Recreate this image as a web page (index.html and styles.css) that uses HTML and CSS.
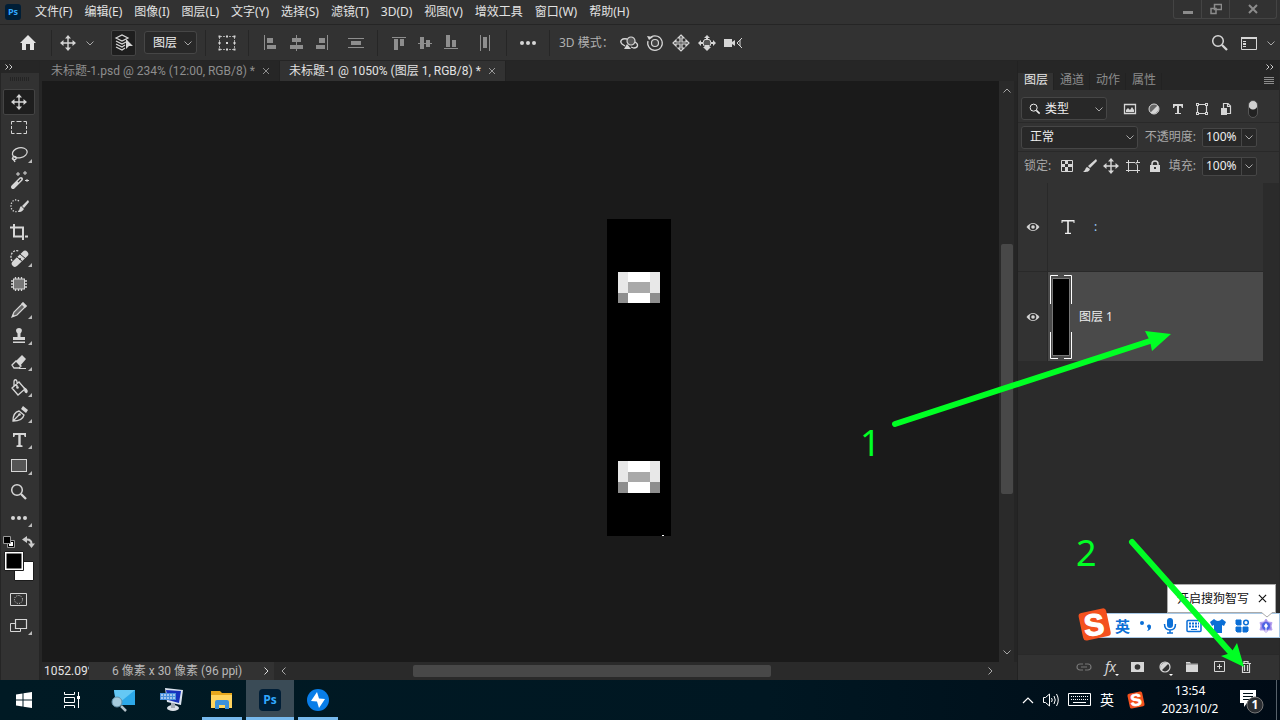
FILE: index.html
```html
<!DOCTYPE html>
<html lang="zh-CN">
<head>
<meta charset="utf-8">
<meta name="viewport" content="width=device-width, initial-scale=1">
<title>Photoshop</title>
<link rel="stylesheet" href="styles.css">
</head>
<body>
<svg class="sprite" aria-hidden="true">
  <symbol id="move" viewBox="-12 -12 24 24"><path d="M0-6V6M-6 0H6" fill="none" stroke="currentColor" stroke-width="1.4"/><path d="M0-8L3-4.500H-3ZM0 8L3 4.500H-3ZM-8 0L-4.500-3V3ZM8 0L4.500-3V3Z" fill="currentColor"/></symbol>
  <symbol id="chev" viewBox="-6 -6 12 12"><path d="M-3.500-1.500L0 2L3.500-1.500" fill="none" stroke="currentColor"/></symbol>
  <symbol id="more" viewBox="-12 -12 24 24"><g fill="currentColor"><circle cx="-6" r="2"/><circle r="2"/><circle cx="6" r="2"/></g></symbol>
  <symbol id="marquee" viewBox="-12 -12 24 24"><path d="M-7.500-3.500V-6.500H-4.500M-2.500-6.500H2.500M4.500-6.500H7.500V-3.500M7.500-2V1M7.500 2.500V5.500H4.500M2.500 5.500H-2.500M-4.500 5.500H-7.500V2.500M-7.500 1V-2" fill="none" stroke="currentColor"/></symbol>
  <symbol id="lasso" viewBox="-12 -12 24 24"><g fill="none" stroke="currentColor" stroke-width="1.300"><ellipse cx="1" cy="-1" rx="7.500" ry="5" transform="rotate(-12)"/><circle cx="-4.500" cy="4" r="1.700"/><path d="M-6 4C-8 5-5 5-4 8"/></g></symbol>
  <symbol id="wand" viewBox="-12 -12 24 24"><path d="M-6 7L2-1" stroke="currentColor" stroke-width="4" stroke-linecap="round"/><path d="M-1 2L2-1" stroke="#323232" stroke-width="1.300"/><path d="M-1-8V-4M-3-6H1M6-9V-5M4-7H8M8-1V2M6 .5H10" stroke="currentColor"/></symbol>
  <symbol id="quick" viewBox="-12 -12 24 24"><path d="M0-5C-5-8-8-4-8 0S-5 7 0 5" fill="none" stroke="currentColor" stroke-width="1.300" stroke-dasharray="1.300 1.500"/><path d="M9-6L10-4L5 2L3 0ZM2 0L5 3C3 6 1 6-1 6C1 4 0 2 2 0Z" fill="currentColor"/></symbol>
  <symbol id="crop" viewBox="-12 -12 24 24"><path d="M-6-4.500H4V8M-5-8V4.500H5" fill="none" stroke="currentColor" stroke-width="2"/><path d="M-9-5.500H-6V-3.500H-9ZM6 3.500H9V5.500H6Z" fill="currentColor"/></symbol>
  <symbol id="heal" viewBox="-12 -12 24 24"><path d="M-4 5.500L6-4" stroke="currentColor" stroke-width="6.500" stroke-linecap="round"/><path d="M-2-1L4 4M1-4L7 1" stroke="#323232"/><circle cx="1" cy="1" r="1" fill="#323232"/><path d="M-7 3C-10-3-6-9 0-7" fill="none" stroke="currentColor" stroke-width="1.300" stroke-dasharray="2 1.300"/></symbol>
  <symbol id="frame" viewBox="-12 -12 24 24"><rect x="-5.500" y="-5" width="11" height="10" fill="#777" stroke="currentColor"/><path d="M-3.500-7V-5M-.5-7V-5M2.500-7V-5M-3.500 5V7M-.5 5V7M2.500 5V7M-8-3H-6M-8 0H-6M-8 3H-6M6-3H8M6 0H8M6 3H8" stroke="currentColor" stroke-width="1.300"/></symbol>
  <symbol id="pencil" viewBox="-12 -12 24 24"><path d="M-7 7L-5 2L4-7L7-4L-2 5Z" fill="#666" stroke="currentColor" stroke-width="1.200"/><path d="M2-6L4-8L8-4L6-2ZM-7 7L-6 4L-4 6Z" fill="currentColor"/></symbol>
  <symbol id="stamp" viewBox="-12 -12 24 24"><path d="M-1.500-2.500C-4-5-3-8 0-8S4-5 1.500-2.500V1H6V4H-6V1H-1.500ZM-6 5.500H6V7H-6Z" fill="currentColor"/></symbol>
  <symbol id="eraser" viewBox="-12 -12 24 24"><path d="M-7 3L-3-1L2 4L0 6H-5Z" fill="none" stroke="currentColor" stroke-width="1.300"/><path d="M-3-1L3-7L7-3L1 4Z" fill="currentColor"/><path d="M0 6.500H7" stroke="currentColor"/></symbol>
  <symbol id="bucket" viewBox="-12 -12 24 24"><path d="M-7 0L0-6L6 1L-1 7ZM-5-2V-6C-5-9-2-9-2-6V-1" fill="none" stroke="currentColor" stroke-width="1.300"/><circle cx="-1.500" cy="-.5" r="1.300" fill="currentColor"/><path d="M4-1C8 0 10 3 8 5C6 6 5 3 5 1Z" fill="currentColor"/></symbol>
  <symbol id="pen" viewBox="-12 -12 24 24"><path d="M-6 7C-6 2-4-2 0-3L5 1C4 5 0 7-6 7ZM-6 7L0 1" fill="none" stroke="currentColor" stroke-width="1.300"/><circle cx=".5" cy=".5" r="1.300" fill="currentColor"/><path d="M2-5L4-8L9-4L7-1Z" fill="currentColor"/></symbol>
  <symbol id="type" viewBox="-12 -12 24 24"><path d="M-6-7H7V-3H5.700L5-5H1.700V5L3.500 5.500V7H-2.500V5.500L-.7 5V-5H-4L-4.700-3H-6Z" fill="currentColor"/></symbol>
  <symbol id="rect" viewBox="-12 -12 24 24"><rect x="-7.500" y="-6.500" width="15" height="12" fill="#555" stroke="currentColor"/></symbol>
  <symbol id="zoom" viewBox="-12 -12 24 24"><circle cx="-2" cy="-2" r="5.300" fill="none" stroke="currentColor" stroke-width="1.500"/><path d="M2 2L7 7" stroke="currentColor" stroke-width="2.300"/></symbol>
  <symbol id="mask" viewBox="-12 -12 24 24"><path d="M-8.500-6.500H7.500V5.500H-8.500Z" fill="none" stroke="currentColor"/><circle cx="-.5" cy="-.5" r="4" fill="none" stroke="currentColor" stroke-dasharray="1 1.300"/></symbol>
  <symbol id="screen" viewBox="-12 -12 24 24"><path d="M-8.500-2.500H1.500V5.500H-8.500Z" fill="none" stroke="currentColor"/><path d="M-3.500-6.500H7.500V2.500H-3.500Z" fill="#323232" stroke="currentColor" stroke-width="1.200"/></symbol>
  <symbol id="home" viewBox="-12 -12 24 24"><path d="M0-8L8 0H6V7H2V1H-2V7H-6V0H-8Z" fill="currentColor"/></symbol>
  <symbol id="stack" viewBox="-12 -12 24 24"><path d="M-8-5L-2-8L4-5L-2-2ZM-8-2L-2 1L4-2M-8 1L-2 4L1 2M-8 4L-2 7L1 5" fill="none" stroke="currentColor" stroke-width="1.200"/><path d="M2-4L9 3H5L2 6Z" fill="currentColor"/></symbol>
  <symbol id="transform" viewBox="-12 -12 24 24"><path d="M-7-6.500H7M-7 6.500H7M-7.500-6V6M7.500-6V6" stroke="currentColor" stroke-dasharray="2 1" opacity=".7"/><path d="M-8.500-7.500h2v2h-2zM-1-7.500h2v2h-2zM6.500-7.500h2v2h-2zM-8.500-1h2v2h-2zM-1-1h2v2h-2zM6.500-1h2v2h-2zM-8.500 5.500h2v2h-2zM-1 5.500h2v2h-2zM6.500 5.500h2v2h-2z" fill="currentColor"/></symbol>
  <symbol id="al" viewBox="-12 -12 24 24"><path d="M-6-8h1V7h-1zM-3-5h6v5h-6zM-3 2h9v4h-9z" fill="currentColor"/></symbol>
  <symbol id="ac" viewBox="-12 -12 24 24"><path d="M0-8h1V8H0zM-4-5h9v4h-9zM-6 2H7v4H-6z" fill="currentColor"/></symbol>
  <symbol id="ar" viewBox="-12 -12 24 24"><path d="M5-8h1V7H5zM-3-5h6v5h-6zM-6 2h9v4h-9z" fill="currentColor"/></symbol>
  <symbol id="dv" viewBox="-12 -12 24 24"><path d="M-8-5H8v1H-8zM-8 4H8v1H-8zM-5-2H5v4H-5z" fill="currentColor"/></symbol>
  <symbol id="at" viewBox="-12 -12 24 24"><path d="M-7-6H7v1H-7zM-5-4h4V7h-4zM1-4h4v7H1z" fill="currentColor"/></symbol>
  <symbol id="am" viewBox="-12 -12 24 24"><path d="M-7 0H7v1H-7zM-5-6h4V6h-4zM1-3h4v7H1z" fill="currentColor"/></symbol>
  <symbol id="ab" viewBox="-12 -12 24 24"><path d="M-7 5H7v1H-7zM-5-8h4V4h-4zM1-3h4v7H1z" fill="currentColor"/></symbol>
  <symbol id="dh" viewBox="-12 -12 24 24"><path d="M-5-8h1V8h-1zM4-8h1V8H4zM-2-6h4V5h-4z" fill="currentColor"/></symbol>
  <symbol id="orbit" viewBox="-12 -12 24 24"><circle cx="2" cy="-2" r="4" fill="#555" stroke="currentColor" stroke-width="1.200"/><path d="M-2-4C-7-5-10-2-7 1L-4 3M6-1C10 1 9 5 5 5L2 4" fill="none" stroke="currentColor" stroke-width="1.300"/><path d="M-5 6L-2 1L2 6Z" fill="currentColor"/></symbol>
  <symbol id="roll" viewBox="-12 -12 24 24"><circle r="3.500" fill="#444" stroke="currentColor" stroke-width="1.200"/><path d="M-4-6A7.300 7.300 0 1 1-7-2" fill="none" stroke="currentColor" stroke-width="1.200"/><path d="M-8-7L-2-6L-6-3Z" fill="currentColor"/></symbol>
  <symbol id="pan" viewBox="-12 -12 24 24"><path d="M0-8L3-5H1V-1H5V-3L8 0L5 3V1H1V5H3L0 8L-3 5H-1V1H-5V3L-8 0L-5-3V-1H-1V-5H-3Z" fill="#444" stroke="currentColor" stroke-width="1.200"/></symbol>
  <symbol id="slide" viewBox="-12 -12 24 24"><circle r="4" fill="#555" stroke="currentColor"/><path d="M0-8L3-5H1V-3H-1V-5H-3ZM-9 0L-6-3V-1H-4V1H-6V3ZM9 0L6-3V-1H4V1H6V3ZM0 8L-4 4H-2V2H2V4H4Z" fill="currentColor"/></symbol>
  <symbol id="camera" viewBox="-12 -12 24 24"><path d="M-9-4H-1V-1L2-3V3L-1 1V4H-9Z" fill="currentColor"/><path d="M9-5L4 0L9 5M7-3V3" fill="none" stroke="currentColor"/></symbol>
  <symbol id="workspace" viewBox="-12 -12 24 24"><path d="M-7.500-5.500H7.500V6.500H-7.500Z" fill="none" stroke="currentColor"/><path d="M-8-6H8v2H-8zM-6-2h3v1h-3zM-6 0h3v2h-3zM-6 3h3v1h-3z" fill="currentColor"/></symbol>
  <symbol id="image" viewBox="-12 -12 24 24"><path d="M-5.500-4.500H5.500V4.500H-5.500Z" fill="none" stroke="currentColor" stroke-width="1.300"/><path d="M-4 3V1L-2-1L0 1L2-2L4 1V3Z" fill="currentColor"/></symbol>
  <symbol id="adjust" viewBox="-12 -12 24 24"><circle r="5" fill="none" stroke="currentColor" stroke-width="1.200"/><path d="M3.500-3.500A5 5 0 0 0-3.500 3.500Z" fill="currentColor"/></symbol>
  <symbol id="adjust2" viewBox="-12 -12 24 24"><circle r="5" fill="#666" stroke="currentColor"/><path d="M3.500-3.500A5 5 0 0 1-3.500 3.500Z" fill="currentColor"/></symbol>
  <symbol id="smallT" viewBox="-12 -12 24 24"><path d="M-5-5H5V-1H4L3-3H1V4H3V5H-3V4H-1V-3H-3L-4-1H-5Z" fill="currentColor"/></symbol>
  <symbol id="shape" viewBox="-12 -12 24 24"><path d="M-4.500-4.500H4.500V4.500H-4.500Z" fill="none" stroke="currentColor" stroke-width="1.200"/><path d="M-6-6h3v3h-3zM3-6h3v3H3zM-6 3h3v3h-3zM3 3h3v3H3z" fill="currentColor"/><path d="M-5-5h1v1h-1zM4-5h1v1H4zM-5 4h1v1h-1zM4 4h1v1H4z" fill="#323232"/></symbol>
  <symbol id="smart" viewBox="-12 -12 24 24"><path d="M-2.500-1V-5.500H2L4.500-3V4.500H1M1.500-5.500V-2.500H4.500" fill="none" stroke="currentColor" stroke-width="1.200"/><path d="M-5-1H1V6H-5Z" fill="currentColor"/></symbol>
  <symbol id="checker" viewBox="-12 -12 24 24"><path d="M-5.500-5.500H5.500V5.500H-5.500Z" fill="none" stroke="currentColor"/><path d="M-2-5h3v3h-3zM-5-2h3v3h-3zM1-2h4v3H1zM-2 1h3v4h-3z" fill="currentColor"/></symbol>
  <symbol id="brush" viewBox="-12 -12 24 24"><path d="M7-7L8-5L1 2L-1 0ZM-2 1L1 3C0 6-2 6-6 6C-3 4-4 2-2 1Z" fill="currentColor"/></symbol>
  <symbol id="artboard" viewBox="-12 -12 24 24"><path d="M-4.500-6V6M-7-3.500H2L4.500-1V7M-7 4.500H7M4.500-6V-4M3-3.500H7" fill="none" stroke="currentColor"/></symbol>
  <symbol id="lock" viewBox="-12 -12 24 24"><path d="M-3 0V-2C-3-6 3-6 3-2V0" fill="none" stroke="currentColor" stroke-width="1.500"/><path d="M-5-1H5V6H-5Z" fill="currentColor"/><path d="M-1 1h2v2h-2z" fill="#323232"/></symbol>
  <symbol id="eye" viewBox="-12 -12 24 24"><path d="M-6.500 0Q0-8 6.500 0Q0 8-6.500 0Z" fill="currentColor"/><circle r="3.300" fill="#323232"/><circle r="1.800" fill="currentColor"/></symbol>
  <symbol id="bigT" viewBox="-12 -12 24 24"><path d="M-6.500-7H6.500V-4H5.500V-5.500H.8V5.700H3V7H-3V5.700H-.8V-5.500H-5.500V-4H-6.500Z" fill="currentColor"/></symbol>
  <symbol id="link" viewBox="-12 -12 24 24"><path d="M-1-3H-4A3 3 0 0 0-4 3H-1M1-3H4A3 3 0 0 1 4 3H1M-3 0H3" fill="none" stroke="currentColor" stroke-width="1.200"/></symbol>
  <symbol id="addmask" viewBox="-12 -12 24 24"><path d="M-7-5H6V5H-7Z" fill="currentColor"/><circle cx="-.5" r="2.800" fill="#323232"/></symbol>
  <symbol id="folder" viewBox="-12 -12 24 24"><path d="M-6-5H-2L-1-3.500H6V5H-6Z" fill="currentColor"/><path d="M-6-3H6" stroke="#323232" stroke-width=".6"/></symbol>
  <symbol id="plus" viewBox="-12 -12 24 24"><path d="M-4.500-5.500H5.500V4.500H-4.500ZM-2-.5H3M.5-3V2" fill="none" stroke="currentColor"/></symbol>
  <symbol id="trash" viewBox="-12 -12 24 24"><path d="M-5-3.500H5M-2-4V-5.500H2V-4M-3.500-3V5.500H3.500V-3M-1.500-2V4M1.500-2V4" fill="none" stroke="currentColor" stroke-width="1.200"/></symbol>
</svg>

<header class="menubar">
  <svg class="pslogo" viewBox="0 0 16 16"><rect width="16" height="16" rx="3" fill="#001e36"/><text x="8" y="11" text-anchor="middle" font-family="Open Sans, sans-serif" font-weight="700" font-size="9" fill="#31a8ff">Ps</text></svg>
  <nav class="menus">
    <button>文件(F)</button><button>编辑(E)</button><button>图像(I)</button><button>图层(L)</button><button>文字(Y)</button><button>选择(S)</button><button>滤镜(T)</button><button>3D(D)</button><button>视图(V)</button><button>增效工具</button><button>窗口(W)</button><button>帮助(H)</button>
  </nav>
  <div class="winctl">
    <button aria-label="最小化"><svg viewBox="0 0 12 12"><path d="M1 8h10v3H1z" fill="#8c8c8c"/></svg></button>
    <button aria-label="还原"><svg viewBox="0 0 12 12"><path d="M4.500 1.500h7v5h-7zM1 5.500h5v5H1z" fill="#323232" stroke="#8c8c8c" stroke-width="1.500"/></svg></button>
    <button class="close" aria-label="关闭"><svg viewBox="0 0 12 12"><path d="M2 2L10 10M10 2L2 10" stroke="#8c8c8c" stroke-width="2"/></svg></button>
  </div>
</header>

<div class="options">
  <button class="cell home" aria-label="主页"><svg><use href="#home"/></svg></button>
  <i class="sep"></i>
  <div class="movegrp"><svg><use href="#move"/></svg><svg class="chev"><use href="#chev"/></svg></div>
  <button class="pressed" aria-label="自动选择"><svg><use href="#stack"/></svg></button>
  <label class="drop autosel"><select aria-label="自动选择"><option>图层</option></select><svg class="chev"><use href="#chev"/></svg></label>
  <i class="sep"></i>
  <button class="cell" aria-label="变换控件"><svg><use href="#transform"/></svg></button>
  <i class="sep"></i>
  <div class="grp dim"><button class="cell" aria-label="左对齐"><svg><use href="#al"/></svg></button><button class="cell" aria-label="水平居中"><svg><use href="#ac"/></svg></button><button class="cell" aria-label="右对齐"><svg><use href="#ar"/></svg></button></div>
  <button class="cell dim" aria-label="垂直分布"><svg><use href="#dv"/></svg></button>
  <i class="sep"></i>
  <div class="grp dim"><button class="cell" aria-label="顶对齐"><svg><use href="#at"/></svg></button><button class="cell" aria-label="垂直居中"><svg><use href="#am"/></svg></button><button class="cell" aria-label="底对齐"><svg><use href="#ab"/></svg></button></div>
  <button class="cell dim" aria-label="水平分布"><svg><use href="#dh"/></svg></button>
  <i class="sep"></i>
  <button class="cell" aria-label="更多"><svg><use href="#more"/></svg></button>
  <i class="sep"></i>
  <span class="mode">3D 模式：</span>
  <div class="grp"><button class="cell" aria-label="环绕"><svg><use href="#orbit"/></svg></button><button class="cell" aria-label="滚动"><svg><use href="#roll"/></svg></button><button class="cell" aria-label="平移"><svg><use href="#pan"/></svg></button><button class="cell" aria-label="滑动"><svg><use href="#slide"/></svg></button><button class="cell" aria-label="变焦"><svg><use href="#camera"/></svg></button></div>
  <div class="right"><button class="cell" aria-label="搜索"><svg><use href="#zoom"/></svg></button><button class="cell" aria-label="工作区"><svg><use href="#workspace"/></svg></button><svg class="chev"><use href="#chev"/></svg></div>
</div>

<main class="work">
  <aside class="tools">
    <div class="collapse"><svg viewBox="0 0 8 6"><path d="M.5.5L3 3L.5 5.500M4.500.5L7 3L4.500 5.500" fill="none" stroke="#ccc"/></svg></div>
    <div class="grip"></div>
    <button class="tool on" aria-label="移动"><svg><use href="#move"/></svg></button>
    <button class="tool" aria-label="选框"><svg><use href="#marquee"/></svg></button>
    <button class="tool sub" aria-label="套索"><svg><use href="#lasso"/></svg></button>
    <button class="tool" aria-label="魔棒"><svg><use href="#wand"/></svg></button>
    <button class="tool" aria-label="快速选择"><svg><use href="#quick"/></svg></button>
    <button class="tool" aria-label="裁剪"><svg><use href="#crop"/></svg></button>
    <button class="tool sub" aria-label="修复"><svg><use href="#heal"/></svg></button>
    <button class="tool" aria-label="修补"><svg><use href="#frame"/></svg></button>
    <button class="tool sub" aria-label="铅笔"><svg><use href="#pencil"/></svg></button>
    <button class="tool sub" aria-label="图章"><svg><use href="#stamp"/></svg></button>
    <button class="tool sub" aria-label="橡皮擦"><svg><use href="#eraser"/></svg></button>
    <button class="tool sub" aria-label="油漆桶"><svg><use href="#bucket"/></svg></button>
    <button class="tool sub" aria-label="钢笔"><svg><use href="#pen"/></svg></button>
    <button class="tool sub" aria-label="文字"><svg><use href="#type"/></svg></button>
    <button class="tool sub" aria-label="矩形"><svg><use href="#rect"/></svg></button>
    <button class="tool" aria-label="缩放"><svg><use href="#zoom"/></svg></button>
    <button class="tool sub" aria-label="更多工具"><svg><use href="#more"/></svg></button>
    <svg class="swatches" viewBox="0 0 38 50">
      <path d="M6.500 7.500h7v7h-7z" fill="#000" stroke="#999"/><path d="M8 9h4v4H8z" fill="#fff"/><path d="M2.500 3.500h7v7h-7z" fill="#000" stroke="#999"/>
      <path d="M24 6.500H26C29 6.500 30.500 8 30.500 11" fill="none" stroke="#ccc" stroke-width="2"/><path d="M21 6.500L26 3V10ZM30.500 15L27 10.500H34Z" fill="#ccc"/>
      <path d="M13.500 28.500h19v19h-19z" fill="#fff" stroke="#1b1b1b"/><path d="M3.500 18.500h19v19h-19z" fill="#fff" stroke="#1b1b1b"/><path d="M5 20h16v16H5z" fill="#000" stroke="#fff"/>
    </svg>
    <button class="tool" aria-label="快速蒙版"><svg><use href="#mask"/></svg></button>
    <button class="tool sub" aria-label="屏幕模式"><svg><use href="#screen"/></svg></button>
  </aside>

  <section class="doc">
    <div class="tabs">
      <div class="tab"><span>未标题-1.psd @ 234% (12:00, RGB/8) *</span><button aria-label="关闭"><svg viewBox="0 0 8 8"><path d="M1 1L7 7M7 1L1 7" stroke="currentColor"/></svg></button></div>
      <div class="tab cur"><span>未标题-1 @ 1050% (图层 1, RGB/8) *</span><button aria-label="关闭"><svg viewBox="0 0 8 8"><path d="M1 1L7 7M7 1L1 7" stroke="#999"/></svg></button></div>
    </div>
    <div class="view">
      <div class="canvas">
        <svg class="art" viewBox="0 0 64 317" shape-rendering="crispEdges">
          <path d="M0 0h64v317H0z" fill="#000"/>
          <path d="M11 53h42v31H11zM11 242h42v32H11z" fill="#fff"/>
          <path d="M11 53h10v21H11zM43 53h10v21H43zM11 242h10v21H11zM43 242h10v21H43z" fill="#e8e8e8"/>
          <path d="M21 63h22v11H21zM21 253h22v10H21z" fill="#a9a9a9"/>
          <path d="M11 74h10v10H11zM43 74h10v10H43zM11 263h10v11H11zM43 263h10v11H43z" fill="#8e8e8e"/>
          <path d="M55 316h2v1h-2z" fill="#fff"/>
        </svg>
      </div>
      <div class="vscroll"><svg class="chev up"><use href="#chev"/></svg><div class="vtrack"><i></i></div><svg class="chev"><use href="#chev"/></svg></div>
    </div>
    <div class="status">
      <input class="zoomval" value="1052.09%" aria-label="缩放比例">
      <span class="docinfo">6 像素 x 30 像素 (96 ppi)</span>
      <svg class="chev rt lite"><use href="#chev"/></svg>
      <div class="hscroll"><svg class="chev lf"><use href="#chev"/></svg><div class="htrack"><i></i></div><svg class="chev rt"><use href="#chev"/></svg></div>
    </div>
  </section>

  <aside class="panel">
    <div class="collapse end"><svg viewBox="0 0 8 6"><path d="M.5.5L3 3L.5 5.500M4.500.5L7 3L4.500 5.500" fill="none" stroke="#ccc"/></svg></div>
    <div class="ptabs"><button class="cur">图层</button><button>通道</button><button>动作</button><button>属性</button><svg viewBox="0 0 10 8"><path d="M0 .5h10M0 2.500h10M0 4.500h10M0 6.500h10" stroke="#8c8c8c"/></svg></div>
    <div class="row filter">
      <label class="drop kind"><svg class="mag"><use href="#zoom"/></svg><select aria-label="类型"><option>类型</option></select><svg class="chev"><use href="#chev"/></svg></label>
      <div class="icons wide"><svg><use href="#image"/></svg><svg><use href="#adjust2"/></svg><svg><use href="#smallT"/></svg><svg><use href="#shape"/></svg><svg><use href="#smart"/></svg></div>
      <button class="toggle" aria-label="滤镜开关"></button>
    </div>
    <div class="row">
      <label class="drop blend"><select aria-label="混合模式"><option>正常</option></select><svg class="chev"><use href="#chev"/></svg></label>
      <label class="lab" for="op">不透明度:</label>
      <div class="num"><input id="op" value="100%"><button aria-label="展开"><svg class="chev"><use href="#chev"/></svg></button></div>
    </div>
    <div class="row last">
      <span class="lab first">锁定:</span>
      <div class="icons tight"><svg><use href="#checker"/></svg><svg><use href="#brush"/></svg><svg><use href="#move"/></svg><svg><use href="#artboard"/></svg><svg><use href="#lock"/></svg></div>
      <label class="lab" for="fi">填充:</label>
      <div class="num"><input id="fi" value="100%"><button aria-label="展开"><svg class="chev"><use href="#chev"/></svg></button></div>
    </div>
    <div class="layers">
      <div class="layer"><button class="eye" aria-label="可见"><svg><use href="#eye"/></svg></button><div class="body"><svg class="t"><use href="#bigT"/></svg><span class="colon">:</span></div></div>
      <div class="layer sel"><button class="eye" aria-label="可见"><svg><use href="#eye"/></svg></button><div class="body"><svg class="thumb" viewBox="0 0 22 84"><path d="M2.500 3.500h17v77h-17z" fill="#000" stroke="#777"/><path d="M8 .5H.5V29M14 .5H21.500V29M8 83.500H.5V57M14 83.500H21.500V57" fill="none" stroke="#fff"/></svg><span>图层 1</span></div></div>
    </div>
    <div class="foot">
      <button class="off" aria-label="链接"><svg><use href="#link"/></svg></button><button class="fx sub">fx</button><button aria-label="蒙版"><svg><use href="#addmask"/></svg></button><button class="sub" aria-label="调整"><svg><use href="#adjust"/></svg></button><button aria-label="组"><svg><use href="#folder"/></svg></button><button aria-label="新建"><svg><use href="#plus"/></svg></button><button aria-label="删除"><svg><use href="#trash"/></svg></button>
    </div>
  </aside>
</main>

<footer class="taskbar">
  <button class="app" aria-label="开始"><svg viewBox="0 0 24 24"><path d="M4 6.500L10.500 5.500V11.500H4ZM11.500 5.300L20 4V11.500H11.500ZM4 12.500H10.500V18.500L4 17.500ZM11.500 12.500H20V20L11.500 18.700Z" fill="#fff"/></svg></button>
  <button class="app" aria-label="任务视图"><svg viewBox="0 0 24 24"><path d="M4.500 4V6.500H14.500V4M4.500 20V17.500H14.500V20M4.500 9.500H14.500V14.500H4.500ZM18.500 4V20" fill="none" stroke="#fff"/><path d="M17 8h3v3h-3z" fill="#fff"/></svg></button>
  <button class="app gap" aria-label="放大镜"><svg viewBox="0 0 24 24"><path d="M3 2L24 2V17L5 17Z" fill="#2da8e8"/><path d="M3 2L24 2L8 15L5 14Z" fill="#65c8f4"/><circle cx="6" cy="14" r="5" fill="#a5cbdc" stroke="#6391a8"/><path d="M10 18L15 23" stroke="#b3c1c9" stroke-width="2.500"/></svg></button>
  <button class="app" aria-label="远程键盘"><svg viewBox="0 0 24 24"><path d="M6 0L24 2L22 17L8 14Z" fill="#dbe4ef"/><path d="M7 2L22 3L20 15L9 12Z" fill="#1732bd"/><ellipse cx="14" cy="20" rx="6" ry="3" fill="#dce2e8"/><path d="M12 15h4v5h-4z" fill="#a5adb5"/><path d="M1 5H17V12H1Z" fill="#4a91de"/><path d="M2 7H16M2 10H16" stroke="#fff" stroke-dasharray="2 1"/></svg></button>
  <button class="app open gap" aria-label="资源管理器"><svg viewBox="0 0 24 24"><path d="M1 3H10L12 5H22V20H1Z" fill="#e6a71d"/><path d="M1 7H22V20H1Z" fill="#ffd45f"/><path d="M5 21V14Q5 12 7 12H17Q19 12 19 14V21H15V17H9V21Z" fill="#3c91db"/></svg></button>
  <button class="app active" aria-label="Photoshop"><svg viewBox="0 0 24 24"><rect x="1" y="1" width="22" height="22" rx="4" fill="#001e36"/><text x="12" y="16" text-anchor="middle" font-family="Open Sans, sans-serif" font-weight="700" font-size="12" fill="#31a8ff">Ps</text></svg></button>
  <button class="app open" aria-label="闪电"><svg viewBox="0 0 24 24"><circle cx="12" cy="12" r="11" fill="#087de8"/><path d="M11 4L5 13L11 13.500L13 20L19 11L13 10.500Z" fill="#fff"/></svg></button>
  <div class="tray">
    <svg class="tchev" viewBox="0 0 12 8"><path d="M1 7L6 2L11 7" fill="none" stroke="#fff" stroke-width="1.200"/></svg>
    <svg class="spk" viewBox="0 0 18 16"><path d="M1.500 5.500H3.500L7.500 2V14L3.500 10.500H1.500ZM9.500 6Q11 8 9.500 10M12 4Q14.500 8 12 12M14.500 2Q18 8 14.500 14" fill="none" stroke="#fff"/></svg>
    <svg class="kbd" viewBox="0 0 24 14"><path d="M.5.500H22.500V12.500H.5Z" fill="none" stroke="#fff"/><path d="M3 3.500H21M3 6.500H21" stroke="#fff" stroke-dasharray="1 1"/><path d="M5 9.500H18" stroke="#fff"/></svg>
    <span class="lang">英</span>
    <svg class="sg" viewBox="0 0 32 32"><rect x="4" y="4" width="24" height="24" rx="3" fill="#f4511e" transform="rotate(-12 16 16)"/><text class="sletter" x="16" y="25" text-anchor="middle" transform="rotate(-6 16 16)">S</text></svg>
    <div class="clock"><span>13:54</span><span>2023/10/2</span></div>
    <svg class="note" viewBox="0 0 28 28"><path d="M3 4H19V17H10L7 21V17H3Z" fill="#fff"/><path d="M6 7.500H16M6 10.500H16M6 13.500H14" stroke="#001018"/><circle cx="18" cy="19" r="8" fill="#2a2d31" stroke="#777"/><text x="18" y="23" text-anchor="middle" font-family="Noto Sans, sans-serif" font-size="12" font-weight="700" fill="#fff">1</text></svg>
  </div>
</footer>

<div class="ime">
  <div class="tip"><span>开启搜狗智写</span><button aria-label="关闭"><svg viewBox="0 0 10 10"><path d="M1 1L9 9M9 1L1 9" stroke="#111" stroke-width="1.300"/></svg></button></div>
  <div class="imebar">
    <svg class="slogo" viewBox="0 0 32 32"><rect x="4" y="4" width="25" height="25" rx="3" fill="#f4511e" transform="rotate(-12 16 16)"/><text class="sletter" x="16" y="26" text-anchor="middle" transform="rotate(-6 16 16)">S</text></svg>
    <b>英</b>
    <svg viewBox="0 0 16 16"><circle cx="4" cy="5" r="2" fill="#0b6fd6"/><path d="M9 8a2 2 0 1 1 4 1Q13 12 9 13Q11 11 10 10Q9 9 9 8" fill="#0b6fd6"/></svg>
    <svg viewBox="0 0 16 16"><rect x="5" y="0" width="6" height="10" rx="3" fill="#0b6fd6"/><path d="M2.500 6Q2.500 12 8 12T13.500 6M8 12V15M5 15H11" fill="none" stroke="#0b6fd6" stroke-width="1.500"/></svg>
    <svg viewBox="0 0 16 16"><rect x="1" y="2.500" width="14" height="11" rx="1" fill="none" stroke="#0b6fd6" stroke-width="1.500"/><path d="M3 5.500H13M3 8.500H13" stroke="#0b6fd6" stroke-width="2" stroke-dasharray="2 1"/><path d="M5 11.500H11" stroke="#0b6fd6"/></svg>
    <svg viewBox="0 0 16 16"><path d="M4 1Q8 5 12 1L16 4L14 8L12 7V15H4V7L2 8L0 4Z" fill="#0b6fd6"/></svg>
    <svg viewBox="0 0 16 16"><path d="M2 2h5v5H3L2 6zM2 9h5v5H3L2 13zM9 9h5v4l-1 1H9z" fill="#0b6fd6" stroke="#0b6fd6"/><circle cx="12" cy="4.500" r="2.300" fill="none" stroke="#0b6fd6" stroke-width="1.500"/></svg>
    <svg viewBox="0 0 16 16"><path d="M8 1L10 4L14 4.500L13 8L14 12L10 12L8 15L6 12L2 12L3 8L2 4.500L6 4Z" fill="#9d86e6" stroke="#b6a3ef"/><circle cx="8" cy="8" r="4" fill="#4d63e4"/><path d="M8 5L10 8L8.500 10V15H7.500V10L6 8Z" fill="#fff"/></svg>
  </div>
  <svg class="beak" viewBox="0 0 12 6"><path d="M0 0L6 5L12 0" fill="#fff" stroke="#aaa"/></svg>
</div>

<svg class="notes" viewBox="840 320 440 400">
  <g stroke="#00ff24" stroke-width="6" stroke-linecap="round"><path d="M895 424L1150 341"/><path d="M1132 542L1231 653"/></g>
  <path d="M1171 334L1145 331L1150 341L1152 351ZM1244 667L1237 643L1231 653L1221 656Z" fill="#00ff24"/>
  <text x="860" y="456">1</text><text x="1076" y="566">2</text>
</svg>
</body>
</html>
```

FILE: styles.css
```css
* { box-sizing: border-box; }
body {
  margin: 0;
  min-height: 100vh;
  display: flex;
  flex-direction: column;
  position: relative;
  overflow: hidden;
  background: #323232;
  color: #d6d6d6;
  font: 12px/16px "Noto Sans", "Noto Sans CJK SC", sans-serif;
}
button, input, select { font: inherit; color: inherit; background: none; border: 0; padding: 0; margin: 0; }
svg { display: block; flex: none; }
.sprite { position: absolute; width: 0; height: 0; }
.chev { width: 12px; height: 12px; color: #a8a8a8; }
.up { transform: rotate(180deg); }
.lf { transform: rotate(90deg); }
.rt { transform: rotate(-90deg); }
.lite { color: #ddd; }
.sletter { font: 700 27px "Liberation Sans", sans-serif; fill: #fff; stroke: #fff; }

.menubar { display: flex; align-items: center; height: 25px; padding: 0 3px 0 5px; border-bottom: 1px solid #252525; }
.pslogo { width: 16px; height: 16px; }
.menus { display: flex; gap: 12px; margin-left: 14px; flex: 1; white-space: nowrap; color: #e2e2e2; }
.winctl { display: flex; align-self: flex-start; border: 1px solid #444; border-top: 0; border-radius: 0 0 3px 3px; }
.winctl button { width: 28px; height: 18px; display: grid; place-items: center; border-right: 1px solid #444; }
.winctl .close { width: 46px; border: 0; }
.winctl svg { width: 12px; height: 12px; }

.options { display: flex; align-items: center; gap: 8px; height: 36px; padding: 0 3px 0 15px; border-bottom: 1px solid #252525; }
.options svg:not(.chev) { width: 24px; height: 24px; }
.cell { width: 26px; height: 26px; display: grid; place-items: center; }
.home { margin-right: 2px; color: #e4e4e4; }
.sep { width: 1px; height: 26px; background: #262626; }
.grp { display: flex; }
.dim { color: #8e8e8e; }
.movegrp { display: flex; align-items: center; gap: 4px; margin: 0 7px 0 -4px; }
.pressed { width: 25px; height: 26px; display: grid; place-items: center; background: #1e1e1e; border: 1px solid #444; border-radius: 2px; }
.drop { display: flex; align-items: center; background: #282828; border: 1px solid #464646; border-radius: 3px; height: 23px; color: #eee; }
.drop select { appearance: none; flex: 1; min-width: 0; height: 21px; outline: 0; }
.autosel { width: 53px; padding: 0 2px 0 8px; }
.mode { margin-left: 1px; width: 49px; white-space: nowrap; color: #b0b0b0; }
.right { display: flex; align-items: center; margin-left: auto; gap: 3px; }

.work { flex: 1; display: flex; min-height: 0; background: #262626; }
.tools { width: 40px; display: flex; flex-direction: column; align-items: flex-start; background: #323232; border-left: 1px solid #252525; border-right: 1px solid #252525; padding-left: 2px; }
.collapse { display: flex; align-items: center; height: 12px; }
.tools .collapse { align-self: stretch; margin-left: -2px; padding-left: 4px; background: #262626; }
.collapse svg { width: 8px; height: 6px; }
.collapse.end { justify-content: flex-end; padding-right: 5px; background: #262626; }
.grip { width: 20px; height: 4px; margin: 4px 0 8px 7px; background: repeating-linear-gradient(90deg, #242424 0 1px, #323232 1px 2px); }
.tool { position: relative; width: 32px; height: 26px; display: grid; place-items: center; }
.tool svg { width: 24px; height: 24px; }
.on { background: #1e1e1e; border: 1px solid #444; border-radius: 2px; }
.tool.sub::after { content: ""; position: absolute; right: 3px; bottom: 4px; border: 2px solid; border-color: transparent #bbb #bbb transparent; }
.swatches { width: 38px; height: 50px; margin: 2px 0 4px -2px; }

.doc { flex: 1; min-width: 0; display: flex; flex-direction: column; margin-left: 2px; }
.tabs { display: flex; height: 20px; background: #262626; font-family: Roboto, "Noto Sans CJK SC", sans-serif; }
.tab { display: flex; align-items: center; gap: 7px; padding: 0 9px; color: #8e8e8e; white-space: nowrap; border-right: 1px solid #222; }
.tab button { width: 8px; }
.tab svg { width: 8px; height: 8px; }
.tab.cur { background: #323232; color: #e2e2e2; }
.view { flex: 1; display: flex; min-height: 0; }
.canvas { position: relative; flex: 1; background: #1a1a1a; overflow: hidden; }
.art { position: absolute; left: 565px; top: 138px; width: 64px; height: 317px; }
.vscroll { width: 18px; display: flex; flex-direction: column; align-items: center; padding: 4px 0; background: #2a2a2a; border-right: 3px solid #252525; }
.vtrack { flex: 1; width: 12px; padding-top: 147px; }
.vtrack i { display: block; height: 250px; background: #484848; border-radius: 2px; }
.status { display: flex; align-items: center; height: 18px; background: #323232; }
.zoomval { width: 47px; padding-left: 2px; height: 18px; color: #e4e4e4; background: #282828; outline: 0; font-family: Roboto, sans-serif; }
.docinfo { width: 148px; margin-left: 23px; color: #b8b8b8; white-space: nowrap; font-family: Roboto, "Noto Sans CJK SC", sans-serif; }
.hscroll { flex: 1; display: flex; align-items: center; align-self: stretch; background: #2a2a2a; margin-left: 2px; padding: 0 21px 0 4px; }
.htrack { flex: 1; padding-left: 123px; }
.htrack i { display: block; width: 358px; height: 12px; background: #484848; border-radius: 2px; }

.panel { width: 263px; display: flex; flex-direction: column; background: #2b2b2b; border-left: 1px solid #222; border-right: 1px solid #282828; }
.ptabs { display: flex; height: 17px; background: #262626; align-items: stretch; padding-right: 5px; }
.ptabs button { padding: 0 5px 3px 6px; color: #8c8c8c; border-right: 1px solid #222; white-space: nowrap; line-height: 14px; }
.ptabs .cur { background: #323232; color: #e8e8e8; }
.ptabs svg { width: 10px; height: 8px; margin: 4px 0 0 auto; }
.row { display: flex; align-items: center; height: 29px; padding: 0 22px 0 3px; background: #323232; border-bottom: 1px solid #292929; }
.filter { height: 33px; padding: 5px 21px 0 3px; }
.last { height: 31px; padding-bottom: 3px; border: 0; }
.kind { width: 86px; padding: 0 1px; }
.kind .mag { width: 16px; height: 16px; margin: 0 2px 0 4px; }
.blend { width: 117px; padding: 0 1px 0 8px; }
.icons { display: flex; }
.icons svg { width: 24px; height: 24px; }
.wide { margin-left: 11px; }
.tight svg { margin: 0 -1px; }
.toggle { width: 10px; height: 18px; margin-left: auto; border: 1px solid #555; border-radius: 5px; background: radial-gradient(circle at 4px 4px, #d0d0d0 4px, #222 5px); }
.lab { margin-left: auto; margin-right: 6px; color: #a8a8a8; white-space: nowrap; }
.lab.first { margin: 0 5px 0 3px; }
.num { display: flex; width: 55px; height: 19px; background: #282828; border: 1px solid #464646; border-radius: 2px; }
.num input { width: 38px; padding-left: 3px; color: #eee; outline: 0; }
.num button { width: 15px; display: grid; place-items: center; border-left: 1px solid #464646; }
.layers { flex: 1; padding-right: 16px; }
.layer { display: flex; height: 88px; background: #323232; }
.layer + .layer { border-top: 1px solid #292929; height: 90px; }
.eye { width: 30px; display: grid; place-items: center; border-right: 1px solid #292929; }
.eye svg { width: 24px; height: 24px; }
.body { flex: 1; display: flex; align-items: center; color: #eee; }
.sel .body { background: #4a4a4a; gap: 7px; padding-left: 2px; }
.t { width: 24px; height: 24px; margin: 0 14px 0 8px; }
.colon { color: #9fd0ff; }
.thumb { width: 22px; height: 84px; }
.foot { display: flex; height: 26px; padding-left: 52px; background: #323232; border-top: 1px solid #292929; }
.foot button { position: relative; width: 27px; display: grid; place-items: center; padding-bottom: 2px; }
.foot svg { width: 24px; height: 24px; }
.foot .off { color: #777; }
.fx { font-style: italic; font-size: 14px; }
.foot .sub::after { content: ""; position: absolute; right: 5px; bottom: 4px; border: 2px solid transparent; border-top-color: #fff; border-bottom: 0; }

.taskbar { display: flex; height: 40px; background: linear-gradient(90deg, #001a24, #001722 60%, #000b16); }
.app { width: 48px; height: 40px; display: grid; place-items: center; }
.app svg { width: 24px; height: 24px; }
.gap { margin-left: 3px; }
.open { background: linear-gradient(#76b9ed, #76b9ed) center bottom / 40px 3px no-repeat; }
.active { background: #3a4b56; border-bottom: 3px solid #76b9ed; padding-top: 2px; }
.tray { display: flex; align-items: center; margin-left: auto; margin-right: 3px; padding-right: 11px; border-right: 1px solid #57616a; color: #fff; gap: 8px; }
.tchev { width: 12px; height: 8px; }
.spk { width: 18px; height: 16px; }
.kbd { width: 24px; height: 14px; }
.lang { font-size: 14px; margin-right: 4px; }
.sg { width: 20px; height: 20px; margin-right: 2px; }
.clock { display: flex; flex-direction: column; align-items: center; line-height: 18px; width: 68px; margin-right: 5px; }
.note { width: 28px; height: 28px; }

.ime { position: absolute; right: 0; bottom: 82px; color: #111; }
.tip { display: flex; align-items: center; justify-content: space-between; width: 109px; height: 29px; margin: 0 4px 0 auto; padding: 0 8px 0 9px; background: #fff; border: 1px solid #aaa; white-space: nowrap; }
.tip button, .tip svg { width: 9px; height: 9px; }
.imebar { display: flex; align-items: center; gap: 8px; height: 25px; padding-right: 5px; background: #fff; border: 1px solid #a9c9e6; margin-left: 8px; }
.imebar svg { width: 16px; height: 16px; }
.imebar .slogo { width: 36px; height: 36px; margin: -4px -5px 0 -12px; }
.imebar b { font-size: 15px; width: 16px; margin-right: -1px; color: #0b6fd6; }
.ime .beak { position: absolute; right: 7px; top: 28px; width: 12px; height: 6px; }
.notes { position: absolute; right: 0; bottom: 0; width: 440px; height: 400px; pointer-events: none; }
.notes text { fill: #00ff24; font: 36px "Noto Sans", sans-serif; }
```
